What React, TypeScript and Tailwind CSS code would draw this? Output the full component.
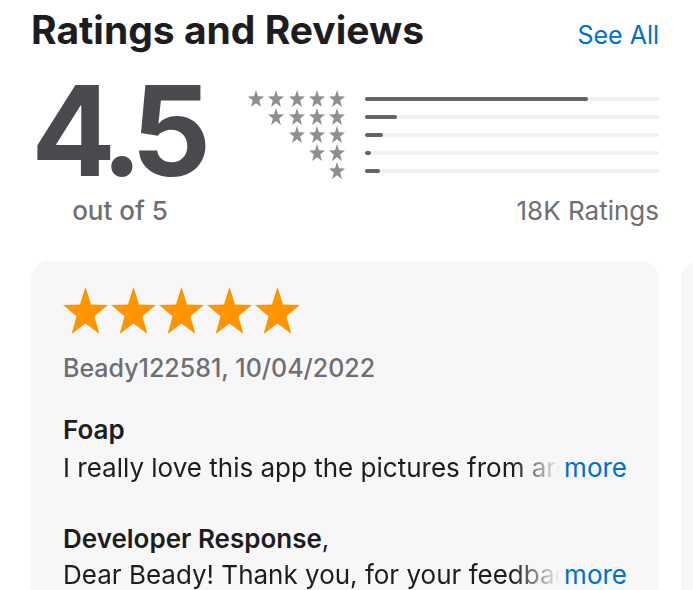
const STAR_POINTS =
  "12,1.3 14.7,9.08 22.94,9.25 16.37,14.22 18.76,22.1 12,17.4 5.24,22.1 7.63,14.22 1.06,9.25 9.3,9.08";

function Star({ w, h, color }: { w: number; h: number; color: string }) {
  return (
    <svg width={w} height={h} viewBox="1.06 1.3 21.88 20.8" preserveAspectRatio="none" className="shrink-0">
      <polygon points={STAR_POINTS} fill={color} />
    </svg>
  );
}

const histogram = [
  { stars: 5, pct: 76 },
  { stars: 4, pct: 11 },
  { stars: 3, pct: 6 },
  { stars: 2, pct: 2 },
  { stars: 1, pct: 5 },
];

function FadedLine({ text }: { text: string }) {
  return (
    <div className="flex items-baseline">
      <span className="min-w-0 flex-1 overflow-hidden whitespace-nowrap text-[#1d1d1f] [mask-image:linear-gradient(to_left,transparent_0px,black_46px)]">
        {text}
      </span>
      <span className="ml-1 shrink-0 text-[#0070c9]">more</span>
    </div>
  );
}

function ReviewCard() {
  return (
    <div className="h-[360px] w-[628px] shrink-0 rounded-[18px] bg-[#f7f7f7] px-8 pt-[26px]">
      <div className="flex gap-[3px]">
        {[0, 1, 2, 3, 4].map((i) => (
          <Star key={i} w={45} h={47} color="#ff9500" />
        ))}
      </div>
      <div className="mt-[18px] text-[25px] leading-[32px] font-medium text-[#6e6e73]">
        Beady122581, 10/04/2022
      </div>
      <div className="mt-[27px] text-[26px] leading-[38px]">
        <div className="font-semibold text-[#1d1d1f]">Foap</div>
        <FadedLine text="I really love this app the pictures from around the world are amazing" />
      </div>
      <div className="mt-[34px] text-[26px] leading-[36px]">
        <div className="font-semibold text-[#1d1d1f]">
          Developer Response<span className="font-normal">,</span>
        </div>
        <FadedLine text="Dear Beady! Thank you, for your feedback. We are so happy" />
      </div>
    </div>
  );
}

export default function App() {
  return (
    <div className="h-[590px] w-[693px] overflow-hidden bg-white font-['Inter',sans-serif]">
      <div className="ml-[31px] w-[628px]">
        <div className="flex items-baseline justify-between pt-[7px]">
          <h1 className="text-[39px] leading-[46px] font-bold text-[#1d1d1f]">Ratings and Reviews</h1>
          <span className="text-[25px] text-[#0070c9]">See All</span>
        </div>

        <div className="mt-[15px] flex">
          <div className="flex w-[178px] flex-col items-center">
            <div className="-mt-[2px] pr-[8px] text-[125px] leading-none font-bold tracking-[-0.085em] text-[#4a4a4e]">
              4.5
            </div>
            <div className="mt-[2px] text-[26px] leading-[32px] font-medium text-[#6e6e73]">out of 5</div>
          </div>

          <div className="flex flex-1 flex-col pt-[20px]">
            {histogram.map((row) => (
              <div key={row.stars} className="flex h-[18px] items-center">
                <div className="flex w-[156px] justify-end gap-[4.25px] pr-[20px]">
                  {Array.from({ length: row.stars }).map((_, i) => (
                    <Star key={i} w={16} h={17} color="#8e8e93" />
                  ))}
                </div>
                <div className="h-[4px] flex-1 rounded-full bg-[#f0f0f5]">
                  <div className="h-full rounded-full bg-[#636366]" style={{ width: `${row.pct}%` }} />
                </div>
              </div>
            ))}
            <div className="mt-[15px] text-right text-[26px] leading-[32px] text-[#6e6e73]">18K Ratings</div>
          </div>
        </div>
      </div>

      <div className="mt-[34px] flex gap-[22px] pl-[31px]">
        <ReviewCard />
        <ReviewCard />
      </div>
    </div>
  );
}
